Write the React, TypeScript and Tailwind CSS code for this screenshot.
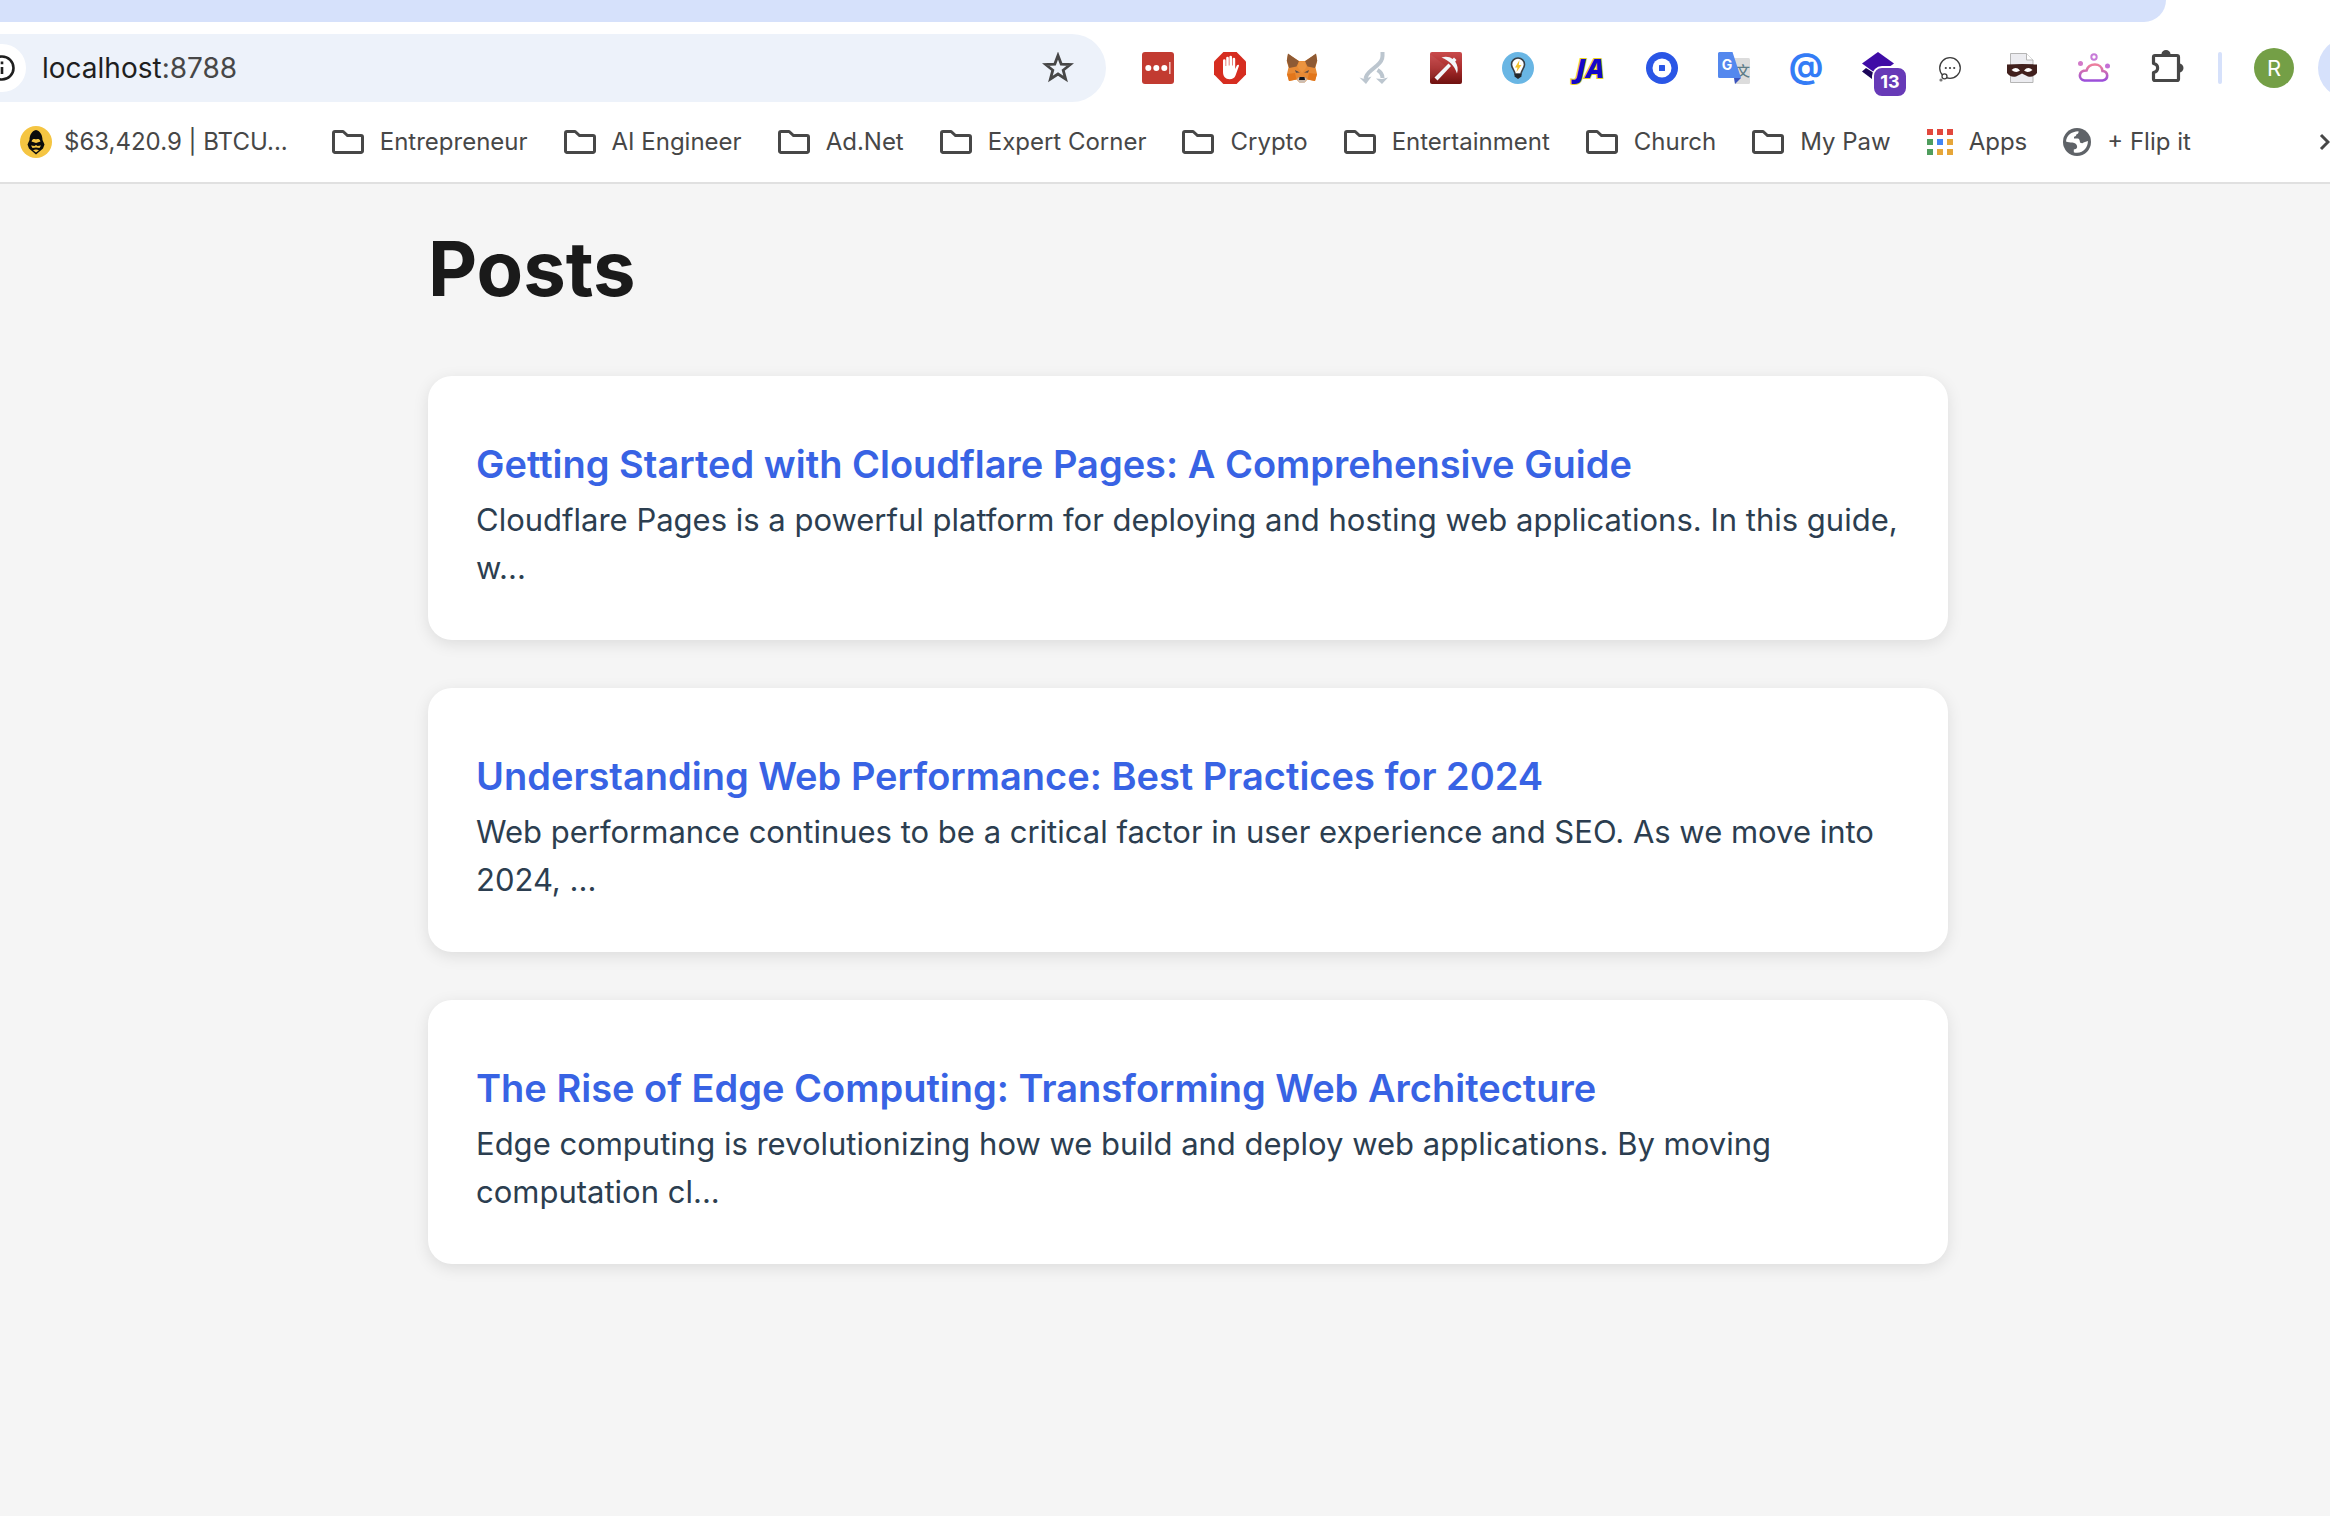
import type { ReactNode } from "react";

function Icon({ children, label }: { children: ReactNode; label: string }) {
  return (
    <button aria-label={label} className="relative h-8 w-8 shrink-0">
      <svg viewBox="0 0 32 32" className="h-8 w-8 overflow-visible" fill="none">
        {children}
      </svg>
    </button>
  );
}

function FolderIcon() {
  return (
    <svg viewBox="0 0 32 32" className="h-8 w-8 shrink-0" fill="none" stroke="#474747" strokeWidth="3">
      <path d="M3 5.5H10.6a1.5 1.5 0 0 1 1.1.5L15.5 9.5H29A1.5 1.5 0 0 1 30.5 11V25A1.5 1.5 0 0 1 29 26.5H3A1.5 1.5 0 0 1 1.5 25V7A1.5 1.5 0 0 1 3 5.5Z" />
    </svg>
  );
}

function TickerIcon() {
  return (
    <svg viewBox="0 0 32 32" className="h-8 w-8 shrink-0">
      <circle cx="16" cy="16" r="16" fill="#f5c542" />
      <path d="M16 4C11.500 5 9.500 9.500 9.500 14L7.500 18.500 9 22.500 16 28.500 23 22.500 24.500 18.500 22.500 14C22.500 9.500 20.500 5 16 4Z" fill="#0b0b0b" />
      <path d="M11.500 15.500C12.500 12.500 14.500 13 16 13.500 17.500 13 19.500 12.500 20.500 15.500L16 17Z" fill="#f5c542" />
      <path d="M11 19.500L14.500 20 16 19 17.500 20 21 19.500 19.500 22 16 21.500 12.500 22Z" fill="#f5c542" />
      <path d="M13 24.200Q16 22.800 19 24.200L16 26.500Z" fill="#f5c542" />
    </svg>
  );
}

function AppsIcon() {
  const colors = ["#e2483d", "#e2483d", "#e2483d", "#4f9d5d", "#4285f4", "#e6a639", "#4f9d5d", "#e6a639", "#e6a639"];
  return (
    <svg viewBox="0 0 26 26" className="h-[26px] w-[26px] shrink-0">
      {colors.map((c, i) => (
        <rect key={i} x={(i % 3) * 10} y={Math.floor(i / 3) * 10} width="6" height="6" fill={c} />
      ))}
    </svg>
  );
}

function GlobeIcon() {
  return (
    <svg viewBox="0 0 28 28" className="h-7 w-7 shrink-0">
      <circle cx="14" cy="14" r="14" fill="#5f6368" />
      <path d="M3 13.500C3.500 8 8 3.500 15.500 3.300C15.800 5 15 6 13.500 6.300C13.200 8 12.500 8.500 11 8.700V10.500H15C16.500 11 16.800 12.500 17 14.500C18.500 15.500 20 15.500 20.500 14.500L24.900 13C25 19 21 24.500 14 24.800C12.500 24.800 11.500 24.500 10.800 24.200V21.500C12 21.200 13.800 21 14.200 19C14 16 12 15 9.500 14.500C7 14.500 5 14.300 3 13.500Z" fill="#fff" />
    </svg>
  );
}

function Extensions() {
  return (
    <div className="flex items-center gap-10">
      <Icon label="LastPass">
        <rect width="32" height="32" rx="3" fill="#c23b31" />
        <g fill="#fff">
          <circle cx="6.300" cy="16" r="3" />
          <circle cx="14.300" cy="16" r="3" />
          <circle cx="22.300" cy="16" r="3" />
        </g>
        <rect x="27" y="10" width="1.600" height="12" fill="#edb9b5" />
      </Icon>
      <Icon label="AdBlock">
        <path d="M9.400 0H22.600L32 9.400V22.600L22.600 32H9.400L0 22.600V9.400Z" fill="#d62d20" />
        <path d="M9 8.500a1.300 1.300 0 0 1 2.600 0V14h.6V6a1.300 1.300 0 0 1 2.600 0V13.500h.6V5a1.300 1.300 0 0 1 2.600 0V13.500h.6V7a1.300 1.300 0 0 1 2.600 0V17L22.800 13.400C23.600 12.200 25.200 12.500 25 13.800L21.500 23.500C20.500 26 18.500 27.200 15.500 27.200C11.500 27.200 9 24.500 9 20Z" fill="#fff" />
      </Icon>
      <Icon label="MetaMask">
        <path d="M2 2L13 9H19L30 2 31.200 9 29.500 15.500 31 22 29 29 21.500 27.500 18.500 30.500H13.500L10.500 27.500 3 29 1 22 2.500 15.500.8 9Z" fill="#e88a35" />
        <path d="M2 1.500L13 9.200 10.500 14.500 3.200 16 .8 8.500ZM30 1.500L19 9.200 21.500 14.500 28.800 16 31.200 8.500Z" fill="#8e5a34" />
        <path d="M13 9.500H19L20.500 15 16 21 11.500 15Z" fill="#ec9440" />
        <path d="M1 22L9 21 10.500 27.500 3 29ZM31 22L23 21 21.500 27.500 29 29Z" fill="#e2761b" />
        <path d="M9 18L14 20.500 10 20.800ZM23 18L18 20.500 22 20.800Z" fill="#5a4a45" />
        <path d="M11 27L13.500 25H18.500L21 27 18.500 30.800H13.500Z" fill="#cbbdb2" />
        <path d="M13.500 25H18.500L19 28H13Z" fill="#16161c" />
      </Icon>
      <Icon label="Branch">
        <g stroke="#bcc6cf" strokeWidth="4">
          <path d="M24.500 0V4C24.500 8 22.500 10.500 19 13.500L13 18.500C10 21 8 23 7.500 27" />
          <path d="M19.500 18C23 20 24.500 22 24.500 26" />
        </g>
        <path d="M1.500 25.500L6 27 13.500 24.500 8 32ZM18 26.500L24 27 30 25.500 24 32Z" fill="#bcc6cf" />
      </Icon>
      <Icon label="Pickaxe">
        <defs>
          <linearGradient id="pick" x1="0" y1="0" x2="0" y2="1">
            <stop stopColor="#c94a4c" />
            <stop offset=".5" stopColor="#a92c2c" />
            <stop offset="1" stopColor="#6f1110" />
          </linearGradient>
        </defs>
        <rect width="32" height="32" rx="2" fill="url(#pick)" />
        <path d="M0 2V28L16 14Z" fill="#fff" opacity=".06" />
        <path d="M4.500 25.500L18.500 11.500 21 14 7.500 28.500Z" fill="#f2f6fa" />
        <path d="M11.500 5.500C16 4 20 5 22.500 7L24 5.500 26.500 8 25.200 9.500C27.500 13 28.500 17 27 21.500C25.500 17 23.500 14 21 11.500C18.500 9 15.500 7 11.500 5.500Z" fill="#f2f6fa" />
      </Icon>
      <Icon label="Idea">
        <circle cx="16" cy="16" r="16" fill="#69b6e4" />
        <path d="M9.500 12.500a6.500 6.500 0 0 1 13 0C22.500 16 19.500 18 19 22H13C12.500 18 9.500 16 9.500 12.500Z" fill="#fff" stroke="#3a4046" strokeWidth="1.600" />
        <path d="M17.500 8L13 15.500H15.500L14.500 20 19.500 13H16.800Z" fill="#f4c22b" />
        <path d="M12.500 22H19.500V24.500L16 27 12.500 24.500Z" fill="#23272b" />
      </Icon>
      <Icon label="JA">
        <text
          x="16"
          y="26"
          textAnchor="middle"
          className="font-['Open_Sans',sans-serif] text-[27px] font-extrabold italic"
          fill="#1408c8"
          stroke="#e8d21c"
          strokeWidth="2"
          paintOrder="stroke"
        >
          JA
        </text>
      </Icon>
      <Icon label="Wallet">
        <circle cx="16" cy="16" r="16" fill="#2a56e6" />
        <circle cx="16" cy="16" r="9.500" fill="#fff" />
        <rect x="13" y="13" width="6" height="6" rx=".5" fill="#2a56e6" />
      </Icon>
      <Icon label="Translate">
        <path d="M14 6H30.500A1.500 1.500 0 0 1 32 7.500V30.500A1.500 1.500 0 0 1 30.500 32H17Z" fill="#dcdcdc" />
        <text x="25" y="24" textAnchor="middle" className="font-['Noto_Sans_CJK_SC',sans-serif] text-[14px] font-medium" fill="#5f7d88">
          文
        </text>
        <path d="M16 26H23L17 32Z" fill="#3a53bd" />
        <path d="M1.500 0H14.500L23 26H1.500A1.500 1.500 0 0 1 0 24.500V1.500A1.500 1.500 0 0 1 1.500 0Z" fill="#5488ee" />
        <text x="9" y="18" textAnchor="middle" className="font-['Inter',sans-serif] text-[14px] font-bold" fill="#fff">
          G
        </text>
      </Icon>
      <Icon label="Mail">
        <text x="16" y="26" textAnchor="middle" className="font-['Inter',sans-serif] text-[34px] font-bold" fill="#347cf6">
          @
        </text>
      </Icon>
      <button aria-label="Stack, 13 notifications" className="relative h-8 w-8 shrink-0">
        <svg viewBox="0 0 32 32" className="h-8 w-8">
          <path d="M0 19.500L4 16 20 26 14 30Z" fill="#1c0659" />
          <path d="M16 0L32 11.500 16 23 0 11.500Z" fill="#3f0ca6" />
        </svg>
        <span className="absolute top-3.5 left-2.5 flex h-8 w-9 items-center justify-center rounded-[10px] border-2 border-white bg-[#673ab7] text-lg leading-none font-bold text-white">
          13
        </span>
      </button>
      <Icon label="Comments">
        <circle cx="16" cy="16" r="10.300" stroke="#3d3d3d" strokeWidth="1.300" />
        <g fill="#3d3d3d">
          <circle cx="11.800" cy="16" r="1.100" />
          <circle cx="16" cy="16" r="1.100" />
          <circle cx="20.200" cy="16" r="1.100" />
        </g>
        <circle cx="10.500" cy="24.300" r="2.500" fill="#fff" stroke="#3d3d3d" strokeWidth="1.300" />
        <circle cx="7" cy="28" r="1.600" fill="#777" />
      </Icon>
      <Icon label="Mask">
        <path d="M4.500 1.500H20.500L27 8V30.500H4.500Z" fill="#ececf0" stroke="#b5b5b5" />
        <path d="M20.500 1.500V8H27" fill="#fff" stroke="#b5b5b5" />
        <path d="M1 12.500Q16 11.500 31 12.500V21Q28 25.500 22 24.500L16 21.500 10 24.500Q4 25.500 1 21Z" fill="#41201d" />
        <path d="M5.500 18Q10 14 14 18.500 10 21.500 5.500 18ZM26.500 18Q22 14 18 18.500 22 21.500 26.500 18Z" fill="#fff" />
      </Icon>
      <Icon label="Cloud">
        <defs>
          <linearGradient id="cloud" x1="0" y1="0" x2="0" y2="32" gradientUnits="userSpaceOnUse">
            <stop offset=".1" stopColor="#c77bd8" />
            <stop offset=".4" stopColor="#ee7f9b" />
            <stop offset="1" stopColor="#8a45e6" />
          </linearGradient>
        </defs>
        <path d="M6.500 28.500H24.500C31 27.500 30.500 19.500 24.500 19C23.500 10.500 11 10.500 8.500 18.500C0 18.500 0 27.500 6.500 28.500Z" stroke="url(#cloud)" strokeWidth="2.600" />
        <circle cx="16" cy="5" r="2.700" stroke="#c77bd8" strokeWidth="2" />
        <circle cx="2.500" cy="11.500" r="2.500" fill="#d27ac9" />
        <circle cx="29.500" cy="14" r="2.500" fill="#c46fd6" />
      </Icon>
      <Icon label="Extensions">
        <path d="M3.500 11.500V5A1.500 1.500 0 0 1 5 3.500H27A1.500 1.500 0 0 1 28.500 5V27A1.500 1.500 0 0 1 27 28.500H5A1.500 1.500 0 0 1 3.500 27V20.500C9 19.500 9 12.500 3.500 11.500Z" stroke="#474747" strokeWidth="3.200" strokeLinejoin="round" />
        <path d="M11.500 3V2A4.500 4 0 0 1 20.500 2V3ZM29 11.500A4.500 4.500 0 0 1 29 20.500Z" fill="#474747" />
      </Icon>
    </div>
  );
}

function Bookmark({ icon, children }: { icon: ReactNode; children: ReactNode }) {
  return (
    <a href="#" className="flex shrink-0 items-center gap-4 whitespace-nowrap">
      {icon}
      {children}
    </a>
  );
}

const folders = ["Entrepreneur", "AI Engineer", "Ad.Net", "Expert Corner", "Crypto", "Entertainment", "Church", "My Paw"];

const posts = [
  {
    title: "Getting Started with Cloudflare Pages: A Comprehensive Guide",
    excerpt: "Cloudflare Pages is a powerful platform for deploying and hosting web applications. In this guide, w...",
  },
  {
    title: "Understanding Web Performance: Best Practices for 2024",
    excerpt: "Web performance continues to be a critical factor in user experience and SEO. As we move into 2024, ...",
  },
  {
    title: "The Rise of Edge Computing: Transforming Web Architecture",
    excerpt: "Edge computing is revolutionizing how we build and deploy web applications. By moving computation cl...",
  },
];

export default function App() {
  return (
    <div className="min-h-screen overflow-hidden bg-[#f5f5f5] font-['Inter',sans-serif]">
      <header className="border-b-2 border-[#e0e0e0] bg-white">
        <div className="mr-41 h-[22px] rounded-br-3xl bg-[#d6e1fb]" />
        <div className="-mr-12 flex items-center pt-3">
          <div className="flex h-17 flex-1 items-center rounded-r-full bg-[#edf2fa] pr-8">
            <button aria-label="Site information" className="-ml-[22px] flex h-12 w-12 shrink-0 items-center justify-center rounded-full bg-white">
              <svg viewBox="0 0 28 28" className="h-7 w-7" fill="none" stroke="#1f1f1f">
                <circle cx="14" cy="14" r="11.500" strokeWidth="2.600" />
                <path d="M14 13V20M14 7.500V10.300" strokeWidth="2.600" />
              </svg>
            </button>
            <a href="#" className="ml-4 flex-1 text-[28px] leading-9 text-[#474747]">
              <span className="text-[#1f1f1f]">localhost</span>:8788
            </a>
            <button aria-label="Bookmark this tab" className="h-8 w-8">
              <svg viewBox="0 0 32 32" className="h-8 w-8" fill="none" stroke="#474747" strokeWidth="2.800">
                <path d="M16 3.500L19.200 12.100 28.300 12.500 21.200 18.200 23.600 27 16 22 8.400 27 10.800 18.200 3.700 12.500 12.800 12.100Z" />
              </svg>
            </button>
          </div>
          <div className="ml-9 shrink-0">
            <Extensions />
          </div>
          <div className="ml-9 h-8 w-1 shrink-0 rounded-full bg-[#d6e1fb]" />
          <button aria-label="Profile" className="ml-8 h-10 w-10 shrink-0 rounded-full bg-[#749f46] text-[22px] leading-10 text-white">
            R
          </button>
          <div className="ml-6 h-15 w-15 shrink-0 rounded-full bg-[#d6e1fb]" />
        </div>
        <nav className="flex h-20 items-center gap-9 pl-5 text-2xl text-[#474747]">
          <a href="#" className="flex shrink-0 items-center gap-3 whitespace-nowrap">
            <TickerIcon />
            $63,420.9 | BTCU...
          </a>
          <div className="flex flex-1 items-center gap-9 pl-2">
            {folders.map((f) => (
              <Bookmark key={f} icon={<FolderIcon />}>
                {f}
              </Bookmark>
            ))}
            <Bookmark icon={<AppsIcon />}>Apps</Bookmark>
            <Bookmark icon={<GlobeIcon />}>+ Flip it</Bookmark>
          </div>
          <button aria-label="More bookmarks" className="-mr-2 h-6 w-5 shrink-0">
            <svg viewBox="0 0 20 24" className="h-6 w-5" fill="none" stroke="#474747" strokeWidth="3">
              <path d="M3 5L10 12 3 19" />
            </svg>
          </button>
        </nav>
      </header>

      <main className="ml-[46px] pt-9">
        <div className="mx-auto max-w-[1520px]">
          <h1 className="text-[76px] leading-24 font-bold text-[#1a1a1a]">Posts</h1>
          <div className="mt-15 flex flex-col gap-12">
            {posts.map((p) => (
              <article key={p.title} className="rounded-3xl bg-white px-12 pt-16 pb-12 shadow-[0_4px_16px_rgba(0,0,0,0.1)]">
                <h2 className="text-[38px] leading-12 font-semibold text-[#3863e4]">
                  <a href="#">{p.title}</a>
                </h2>
                <p className="mt-2 text-[31px] leading-12 text-[#2c3e50]">{p.excerpt}</p>
              </article>
            ))}
          </div>
        </div>
      </main>
    </div>
  );
}
